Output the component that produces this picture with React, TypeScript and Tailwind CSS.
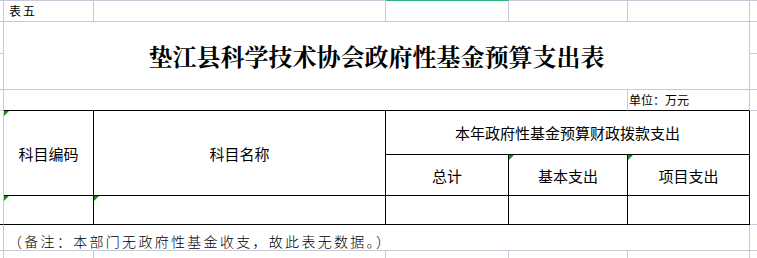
import React from "react";

const grid = "border-[#c6cad6]";
const cjk = "font-['Noto_Sans_CJK_SC','Noto_Sans',sans-serif]";
const serif = "font-['Noto_Serif_CJK_SC','Noto_Sans_CJK_SC',serif]";

function Tick() {
  return (
    <span className="absolute left-0 top-0 w-0 h-0 border-t-[5px] border-t-[#1e8a1e] border-r-[5px] border-r-transparent" />
  );
}

export default function App() {
  return (
    <div className={`w-[757px] h-[258px] overflow-hidden bg-white text-black ${cjk}`}>
      <div
        className={`grid border-t ${grid}`}
        style={{
          gridTemplateColumns: "4px 90px 292px 123px 119px 122px 7px",
          gridTemplateRows: "21px 68px 21px 44px 41px 29px 26px 20px",
        }}
      >
        {/* row 1 */}
        <div className={`border-r border-b ${grid}`} />
        <div className={`border-r border-b ${grid} flex items-center pl-[5px] text-[12px] tracking-[2px] leading-none`}>表五</div>
        <div className={`border-r border-b ${grid}`} />
        <div className={`border-r border-b ${grid} -mt-px border-t border-t-[#2eb07a]`} />
        <div className={`border-r border-b ${grid}`} />
        <div className={`border-r border-b ${grid}`} />
        <div className={`border-b ${grid}`} />

        {/* row 2: title */}
        <div className={`border-r border-b ${grid} flex flex-col`}>
          <div className={`h-[32px] border-b ${grid}`} />
        </div>
        <div className={`col-span-5 border-r border-b ${grid} flex items-center justify-center`}>
          <h1 className={`${serif} text-[24px] font-bold leading-none`}>垫江县科学技术协会政府性基金预算支出表</h1>
        </div>
        <div className={`border-b ${grid} flex flex-col`}>
          <div className={`h-[32px] border-b ${grid}`} />
        </div>

        {/* row 3 */}
        <div className={`border-r border-b ${grid}`} />
        <div className={`col-span-4 border-r ${grid} border-b border-b-black`} />
        <div className={`border-r ${grid} border-b border-b-black flex items-center pl-[1px] text-[12px] leading-none`}>单位：万元</div>
        <div className={`border-b ${grid}`} />

        {/* rows 4-5 */}
        <div className={`row-span-3 border-r ${grid} border-b border-b-black`} />
        <div className="relative row-span-2 border-r border-b border-black flex items-center justify-center text-[15px] leading-none">
          <Tick />
          科目编码
        </div>
        <div className="row-span-2 border-r border-b border-black flex items-center justify-center text-[15px] leading-none">科目名称</div>
        <div className="col-span-3 border-r border-b border-black flex items-center justify-center text-[15px] leading-none">
          本年政府性基金预算财政拨款支出
        </div>
        <div className={`row-span-3 border-b ${grid}`} />
        <div className="border-r border-b border-black flex items-center justify-center text-[15px] leading-none">总计</div>
        <div className="relative border-r border-b border-black flex items-center justify-center text-[15px] leading-none">
          <Tick />
          基本支出
        </div>
        <div className="relative border-r border-b border-black flex items-center justify-center text-[15px] leading-none">
          <Tick />
          项目支出
        </div>

        {/* row 6 */}
        <div className="relative border-r border-b border-black">
          <Tick />
        </div>
        <div className="relative border-r border-b border-black">
          <Tick />
        </div>
        <div className="border-r border-b border-black" />
        <div className="border-r border-b border-black" />
        <div className="border-r border-b border-black" />

        {/* row 7: note */}
        <div className={`border-r border-b ${grid}`} />
        <div className={`col-span-5 border-r border-b ${grid} flex items-end pl-[4px] pb-[2px] text-[14px] tracking-[2.3px] leading-none whitespace-nowrap font-light`}>
          （备注：本部门无政府性基金收支，故此表无数据。）
        </div>
        <div className={`border-b ${grid}`} />

        {/* row 8 */}
        <div className={`border-r ${grid}`} />
        <div className={`border-r ${grid}`} />
        <div className={`border-r ${grid}`} />
        <div className={`border-r ${grid}`} />
        <div className={`border-r ${grid}`} />
        <div className={`border-r ${grid}`} />
        <div />
      </div>
    </div>
  );
}
